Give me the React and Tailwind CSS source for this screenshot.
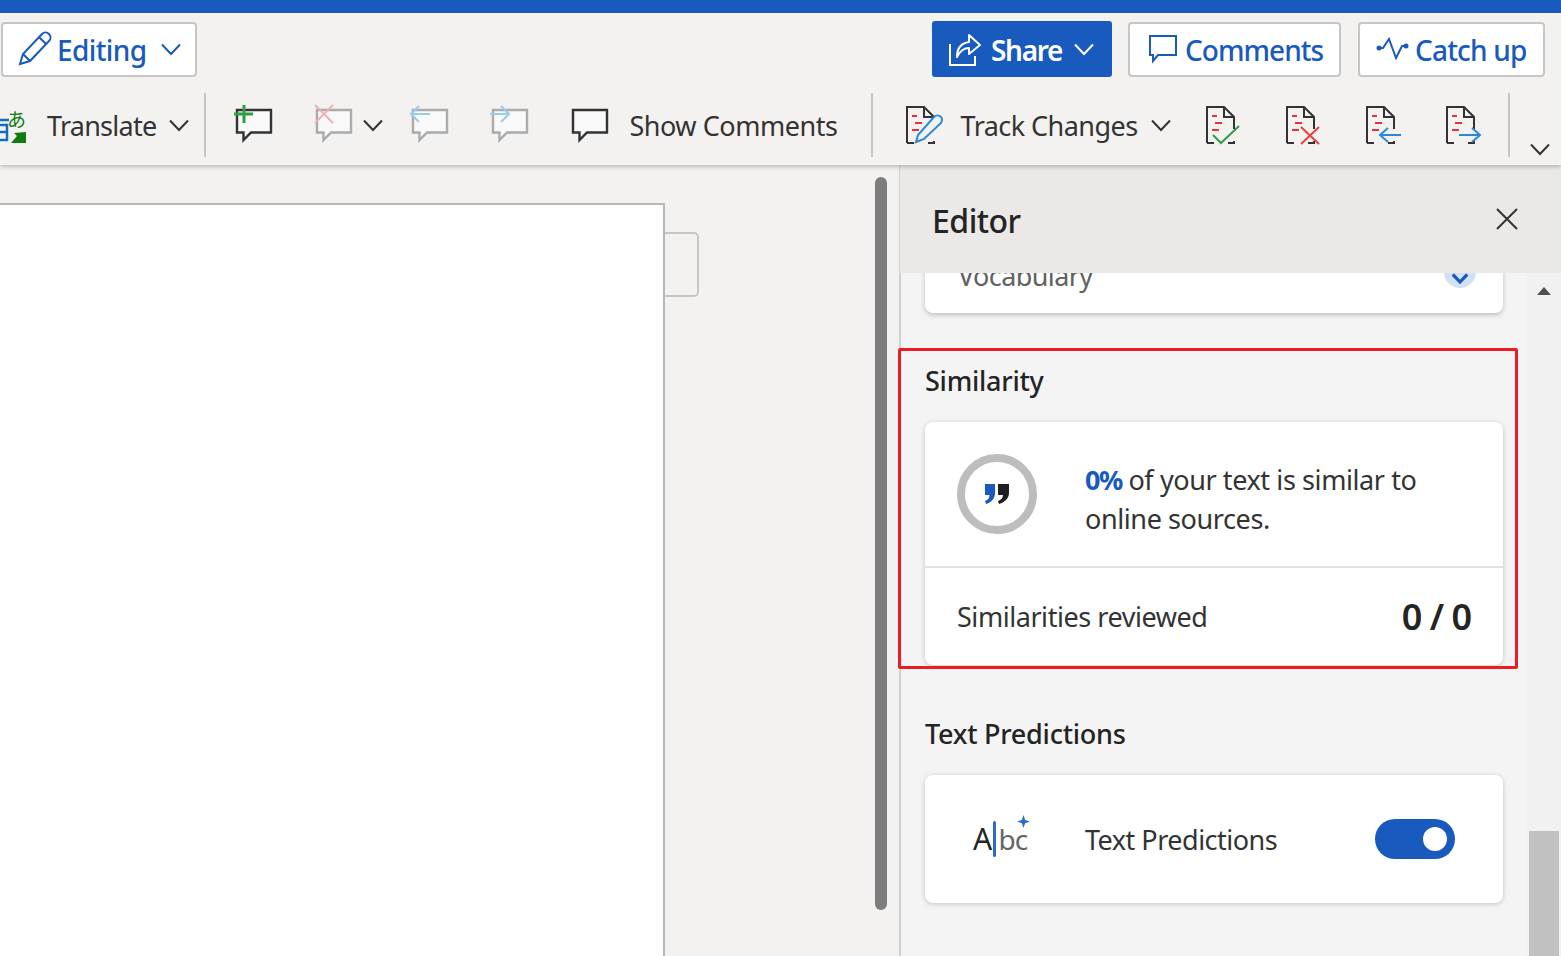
import React from "react";

const Chevron = ({ className = "", color = "#333", size = 20, weight = 2 }) => (
  <svg width={size} height={size} viewBox="0 0 20 20" fill="none" className={`shrink-0 ${className}`}>
    <path d="M1 5.5 L10 15 L19 5.5" stroke={color} strokeWidth={weight} />
  </svg>
);

const Sep = ({ className = "" }) => <div className={`w-[2px] h-16 bg-[#c8c6c4] shrink-0 ${className}`} />;

// comment bubble used by the ribbon buttons
const Bubble = ({ stroke = "#333", children, className = "" }) => (
  <svg width="42" height="42" viewBox="0 0 42 42" fill="none" className={`shrink-0 ${className}`}>
    <path d="M5 6 H39 V28.5 H19 L11.5 36 V28.5 H5 Z" stroke={stroke} strokeWidth="2.4" fill="#f9f9f9" />
    {children}
  </svg>
);

const DocIcon = ({ children, className = "" }) => (
  <svg width="38" height="40" viewBox="0 0 38 40" fill="none" className={`shrink-0 ${className}`}>
    <path d="M1 38 V2 H18 L28 12 V24 M18 2 V12 H28 M1 38 H8 M22 38 H28 V36" stroke="#333" strokeWidth="2" />
    <path d="M6 11 H11 M9 18 H16 M6 25 H13" stroke="#e8313c" strokeWidth="2" />
    {children}
  </svg>
);

const OutlineButton = ({ children, className = "" }) => (
  <button className={`h-[55px] flex items-center bg-white border-2 border-[#c8c6c4] rounded-[4px] text-[#185abd] text-[28px] font-medium ${className}`}>
    {children}
  </button>
);

function Toolbar() {
  return (
    <div className="relative z-20 bg-[#f3f2f1] shadow-[0_2px_4px_rgba(0,0,0,0.22)] shrink-0">
      <div className="h-[13px] bg-[#185abd]" />
      <div className="h-16 pt-2 pr-[16px] flex items-center justify-between">
        <OutlineButton className="ml-px w-[196px] pl-[15px]">
          <svg width="34" height="36" viewBox="0 0 34 36" fill="none">
            <path d="M2 33 L5 23 L24 3 C26 1 29 1 31 3 C33 5 33 8 31 10 L12 30 Z M5 23 L12 30 M21 6 L28 13" stroke="#185abd" strokeWidth="2" />
          </svg>
          <span className="ml-[5px] mt-[1px] tracking-[-0.6px]">Editing</span>
          <Chevron color="#185abd" className="ml-[14px]" />
        </OutlineButton>
        <div className="flex items-center">
          <button className="h-14 w-[180px] pl-[17px] flex items-center rounded-[3px] bg-[#185abd] text-white text-[28px] font-semibold">
            <svg width="32" height="34" viewBox="0 0 32 34" fill="none">
              <path d="M1 12 V33 H26 V24 M1 33" stroke="#fff" strokeWidth="2" />
              <path d="M8 25 C8 15 13 11 20 10 V3 L31 13 L20 22 V16 C15 16 11 19 8 25 Z" stroke="#fff" strokeWidth="2" strokeLinejoin="round" />
            </svg>
            <span className="ml-[10px] mt-[1px] tracking-[-1.3px]">Share</span>
            <Chevron color="#fff" className="ml-[12px]" />
          </button>
          <OutlineButton className="ml-[16px] w-[213px] pl-[18px]">
            <svg width="30" height="30" viewBox="0 0 30 30" fill="none">
              <path d="M2 2 H28 V21 H10 L5 27 V21 H2 Z" stroke="#185abd" strokeWidth="2" />
            </svg>
            <span className="ml-[7px] mt-[1px] tracking-[-0.95px]">Comments</span>
          </OutlineButton>
          <OutlineButton className="ml-[17px] w-[187px] pl-[16px]">
            <svg width="33" height="24" viewBox="0 0 33 24" fill="none">
              <path d="M3 11 L7 11 L13 2 L20 21 L26 9 L30 9" stroke="#185abd" strokeWidth="2" />
              <circle cx="3" cy="11" r="2.5" fill="#185abd" />
              <circle cx="30" cy="9" r="2.5" fill="#185abd" />
            </svg>
            <span className="ml-[6px] mt-[1px] tracking-[-0.8px]">Catch up</span>
          </OutlineButton>
        </div>
      </div>
      <div className="h-[88px] pt-4 pb-2 flex items-center text-[#333] text-[27px] tracking-[-0.75px] whitespace-nowrap overflow-hidden">
        <svg width="28" height="40" viewBox="0 0 28 40" fill="none" className="shrink-0">
          <path d="M0 15 H9 M0 20 H7 V35 H0 M0 27 H7" stroke="#106ebe" strokeWidth="2.5" />
          <text x="7" y="22" fontSize="19" fill="#107c10" fontFamily="'Noto Sans CJK JP', sans-serif">あ</text>
          <path d="M11 38 L17 31 L14 28 L26 27 L26 38 Z" fill="#107c10" />
        </svg>
        <span className="ml-[19px] mt-[2px]">Translate</span>
        <Chevron className="ml-[13px]" />
        <Sep className="ml-[15px]" />
        <Bubble className="ml-[26px]">
          <path d="M2 10 H21 M12 1 V19" stroke="#2f9e44" strokeWidth="3" />
        </Bubble>
        <Bubble stroke="#ababab" className="ml-[38px]">
          <path d="M3 1 L21 19 M21 1 L3 19" stroke="#f2b1b1" strokeWidth="2" />
        </Bubble>
        <Chevron className="ml-[9px]" />
        <Bubble stroke="#ababab" className="ml-[25px]">
          <path d="M22 10 H3 M11 2 L3 10 L11 18" stroke="#9ccbec" strokeWidth="2" fill="none" />
        </Bubble>
        <Bubble stroke="#ababab" className="ml-[38px]">
          <path d="M2 10 H21 M13 2 L21 10 L13 18" stroke="#9ccbec" strokeWidth="2" fill="none" />
        </Bubble>
        <Bubble className="ml-[38px]" />
        <span className="ml-[19px] mt-[2px] tracking-[-0.45px]">Show Comments</span>
        <Sep className="ml-[33px]" />
        <DocIcon className="ml-[33px]">
          <path d="M10 37 L12 30 L28 12 C30 10 33 10 35 12 C37 14 36 16 35 18 L18 34 Z" stroke="#2b88d8" strokeWidth="2" fill="#f3f2f1" />
        </DocIcon>
        <span className="ml-[17px] mt-[2px] tracking-[-0.55px]">Track Changes</span>
        <Chevron className="ml-[13px]" />
        <DocIcon className="ml-[35px]">
          <path d="M7 30 L15 38 L33 21" stroke="#2f9e44" strokeWidth="2" fill="none" />
        </DocIcon>
        <DocIcon className="ml-[42px]">
          <path d="M15 22 L33 39 M33 22 L15 39" stroke="#e8413c" strokeWidth="2" />
        </DocIcon>
        <DocIcon className="ml-[42px]">
          <path d="M35 30 H14 M22 23 L14 30 L22 37" stroke="#2b88d8" strokeWidth="2" fill="none" />
        </DocIcon>
        <DocIcon className="ml-[42px]">
          <path d="M13 30 H34 M26 23 L34 30 L26 37" stroke="#2b88d8" strokeWidth="2" fill="none" />
        </DocIcon>
        <Sep className="ml-[24px]" />
        <Chevron className="ml-[20px] mt-[48px]" />
      </div>
    </div>
  );
}

function DocArea() {
  return (
    <div className="flex-1 flex bg-[#f3f2f1] overflow-hidden">
      <div className="w-[665px] mt-[38px] bg-white border-t-2 border-r-2 border-[#b9b7b5] shrink-0" />
      <div className="w-[34px] h-[65px] mt-[67px] border-2 border-l-0 border-[#c8c6c4] rounded-r-[5px] shrink-0" />
      <div className="w-[12px] h-[733px] ml-[176px] mt-[12px] rounded-full bg-[#7c7c7c] shrink-0" />
    </div>
  );
}

function SectionTitle({ children }) {
  return <h2 className="text-[27px] font-medium text-[#242424] tracking-[-0.25px] leading-[40px]">{children}</h2>;
}

function EditorPane() {
  return (
    <div className="w-[662px] shrink-0 border-l-2 border-[#d2d0ce] flex flex-col bg-[#f4f4f4]">
      <div className="relative z-10 h-[108px] shrink-0 bg-[#ebe9e7] -ml-px pl-[32px] pr-[42px] flex items-center justify-between">
        <span className="mt-[4px] text-[32px] font-medium text-[#242424] tracking-[-0.5px]">Editor</span>
        <svg width="24" height="24" viewBox="0 0 24 24" fill="none">
          <path d="M2 2 L22 22 M22 2 L2 22" stroke="#333" strokeWidth="2" />
        </svg>
      </div>
      <div className="flex-1 flex">
        <div className="w-[626px] pl-[24px] shrink-0">
          <div className="w-[578px] h-[100px] -mt-[60px] pt-[43px] pl-[33px] pr-[27px] bg-white rounded-[8px] shadow-[0_2px_5px_rgba(0,0,0,0.22)] flex items-start justify-between">
            <span className="text-[27px] leading-[40px] text-[#616161] tracking-[-0.6px]">Vocabulary</span>
            <div className="w-[32px] h-[32px] rounded-full bg-[#d3e0f3] flex justify-center">
              <Chevron color="#185abd" size={16} weight={4} className="mt-[14px]" />
            </div>
          </div>

          <section className="relative mt-[48px]">
            {/* red annotation frame from the screenshot */}
            <div className="absolute -left-[27px] -top-[13px] w-[620px] h-[321px] border-[3px] border-[#ed1c24] rounded-[2px] pointer-events-none z-10" />
            <SectionTitle>Similarity</SectionTitle>
            <div className="mt-[21px] w-[578px] bg-white rounded-[8px] shadow-[0_1px_5px_rgba(0,0,0,0.2)]">
              <div className="h-[146px] pl-[32px] flex items-center border-b-2 border-[#e1e1e1]">
                <div className="w-20 h-20 rounded-full border-[8px] border-[#bdbdbd] flex items-center justify-center shrink-0">
                  <svg width="24" height="20" viewBox="0 0 24 20">
                    <path d="M0 0 H10 V9 C10 14 7 18 1 20 L0 17 C3 16 4.5 14 4.5 11 H0 Z" fill="#185abd" />
                    <path d="M13 0 H24 V9 C24 14 20 18 14 20 L13 17 C16 16 18 14 18 11 H13 Z" fill="#1f1f1f" />
                  </svg>
                </div>
                <p className="ml-[48px] mt-[9px] text-[27px] leading-[39px] text-[#333] tracking-[-0.4px]">
                  <span className="font-bold text-[#185abd] tracking-[-1.5px]">0%</span> of your text is similar to
                  <br />
                  online sources.
                </p>
              </div>
              <div className="h-[97px] px-[32px] flex items-center justify-between">
                <span className="mt-[2px] text-[27px] text-[#333] tracking-[-0.45px]">Similarities reviewed</span>
                <span className="text-[36px] font-semibold text-[#242424] tracking-[-1px]">0 / 0</span>
              </div>
            </div>
          </section>

          <section className="mt-[49px]">
            <SectionTitle>Text Predictions</SectionTitle>
            <div className="mt-[21px] w-[578px] h-[128px] px-[48px] bg-white rounded-[8px] shadow-[0_1px_5px_rgba(0,0,0,0.2)] flex items-center">
              <div className="w-[60px] h-[44px] relative shrink-0 flex items-center text-[30px] leading-[38px]">
                <span className="text-[#242424] tracking-[-0.8px]">A</span>
                <span className="w-[3px] h-[36px] shrink-0 bg-[#2b6cc9] rounded-full mx-[2px]" />
                <span className="text-[#666] text-[28px] tracking-[-0.8px]">bc</span>
                <svg width="13" height="13" viewBox="0 0 12 12" className="absolute left-[44px] top-[-2px]">
                  <path d="M6 0 L7.5 4.5 L12 6 L7.5 7.5 L6 12 L4.5 7.5 L0 6 L4.5 4.5 Z" fill="#2b6cc9" />
                </svg>
              </div>
              <span className="ml-[52px] mt-[2px] text-[27px] text-[#333] tracking-[-0.5px]">Text Predictions</span>
              <div className="ml-auto w-20 h-10 rounded-full bg-[#185abd] flex items-center justify-end pr-2 shrink-0">
                <div className="w-6 h-6 rounded-full bg-white" />
              </div>
            </div>
          </section>
        </div>
        <div className="w-[34px] bg-[#f1f1f1] flex flex-col items-center justify-between shrink-0">
          <div className="mt-[14px] w-0 h-0 border-l-[7px] border-r-[7px] border-b-[8px] border-l-transparent border-r-transparent border-b-[#505050]" />
          <div className="w-[30px] h-[125px] bg-[#c1c1c1]" />
        </div>
      </div>
    </div>
  );
}

export default function App() {
  return (
    <div className="w-full h-screen overflow-hidden flex flex-col font-['Noto_Sans',sans-serif]">
      <Toolbar />
      <div className="flex-1 flex overflow-hidden">
        <DocArea />
        <EditorPane />
      </div>
    </div>
  );
}
